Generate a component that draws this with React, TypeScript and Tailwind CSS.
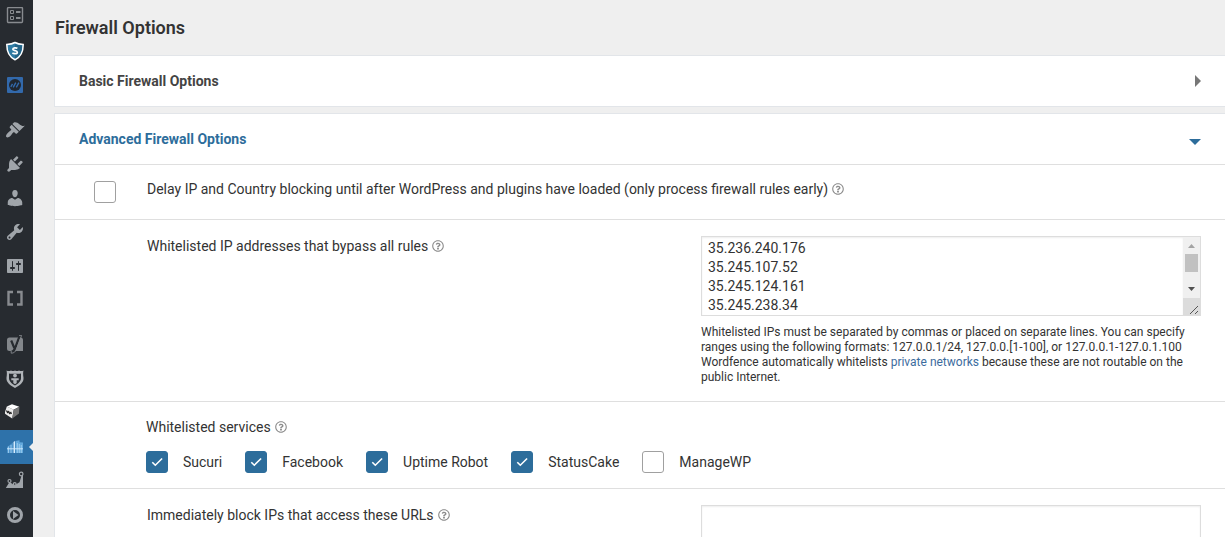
import { useState } from "react";
import type { ReactNode } from "react";
import { FaRegQuestionCircle } from "react-icons/fa";
import clsx from "clsx";

interface MenuItem {
  label: string;
  icon: ReactNode;
  active?: boolean;
  separated?: boolean;
}

const menuItems: MenuItem[] = [
  {
    label: "Forms",
    icon: (
      <g fill="none" stroke="#888b8f">
        <rect x="2.5" y="0.5" width="15" height="15" rx="1" strokeWidth="1.4" />
        <path d="M5.5 3.5h3v3h-3zM5.5 9.5h3v3h-3z" />
        <path d="M11 5h4.5M11 11h4.5" strokeWidth="1.8" />
      </g>
    ),
  },
  {
    label: "Security",
    icon: (
      <>
        <path
          d="M10 1.5C7.5 3 4.5 3.4 1.8 3.5c0 6 1.2 12 8.2 15.2 7-3.200 8.2-9.200 8.2-15.200C15.5 3.4 12.5 3 10 1.500z"
          fill="#2f7ba3"
          stroke="#fff"
          strokeWidth="1.5"
        />
        <path d="M10 3v14.5c5-2.500 7-7 7-13C14.5 4.4 12 4 10 3z" fill="#246487" />
        <path
          d="M12.4 7.4c-1-.8-4.600-1-4.600.9 0 1.800 4.500 1 4.500 2.900 0 2-3.700 1.700-4.900.7"
          fill="none"
          stroke="#fff"
          strokeWidth="1.7"
        />
      </>
    ),
  },
  {
    label: "Managed site",
    icon: (
      <>
        <rect x="2" y="2" width="16" height="16" rx="1" fill="#3269ab" />
        <circle cx="10" cy="10" r="6" fill="#20262e" />
        <path
          d="M5.8 11.8l1.700-3M8.200 12.300l2.600-4.600M11.300 12.300l2.600-4.600"
          stroke="#3269ab"
          strokeWidth="1.4"
        />
      </>
    ),
  },
  {
    label: "Appearance",
    separated: true,
    icon: (
      <path d="M14.48 11.06L7.41 3.99l1.5-1.5c.5-.56 2.3-.47 3.51.32 1.21.8 1.43 1.28 2.91 2.1 1.18.64 2.45 1.26 4.45.85zm-.71.71L6.7 4.7 4.93 6.47c-.39.39-.39 1.02 0 1.41l1.06 1.06c.39.39.39 1.03 0 1.42-.6.6-1.43 1.11-2.21 1.69-.35.26-.7.53-1.01.84C1.43 14.23.4 16.08 1.4 17.07c.99 1 2.84-.03 4.18-1.36.31-.31.58-.66.85-1.02.57-.78 1.08-1.61 1.69-2.21.39-.39 1.02-.39 1.41 0l1.06 1.06c.39.39 1.02.39 1.41 0z" />
    ),
  },
  {
    label: "Plugins",
    icon: (
      <path d="M13.11 4.36L9.87 7.6 8 5.73l3.24-3.24c.35-.34 1.05-.2 1.56.32.52.51.66 1.21.31 1.55zm-8 1.77l.91-1.12 9.01 9.01-1.19.84c-.71.71-2.63 1.16-3.82 1.16H6.14L4.9 17.26c-.59.59-1.54.59-2.12 0-.59-.58-.59-1.53 0-2.12l1.24-1.24v-3.88c0-1.13.4-3.19 1.09-3.89zm7.26 3.97l3.24-3.24c.34-.35 1.04-.21 1.55.31.52.51.66 1.21.31 1.55l-3.24 3.25z" />
    ),
  },
  {
    label: "Users",
    icon: (
      <path d="M10 9.25c-2.27 0-2.73-3.44-2.73-3.44C7 4.02 7.82 2 9.97 2c2.16 0 2.98 2.02 2.71 3.81 0 0-.41 3.44-2.68 3.44zm0 2.57L12.72 10c2.39 0 4.52 2.33 4.52 4.53v2.49s-3.65 1.13-7.24 1.13c-3.65 0-7.24-1.13-7.24-1.13v-2.49c0-2.25 1.94-4.48 4.47-4.48z" />
    ),
  },
  {
    label: "Tools",
    icon: (
      <path d="M16.68 9.77c-1.34 1.34-3.3 1.67-4.95.99l-5.41 6.52c-.99.99-2.59.99-3.58 0s-.99-2.59 0-3.57l6.52-5.42c-.68-1.65-.35-3.61.99-4.95 1.28-1.28 3.12-1.62 4.72-1.06l-2.89 2.89 2.82 2.82 2.86-2.87c.53 1.58.18 3.39-1.08 4.65zM3.81 16.21c.4.39 1.04.39 1.43 0 .4-.4.4-1.04 0-1.43-.39-.4-1.03-.4-1.43 0-.39.39-.39 1.03 0 1.43z" />
    ),
  },
  {
    label: "Settings",
    icon: (
      <path d="M18 16V4c0-.55-.45-1-1-1H3c-.55 0-1 .45-1 1v12c0 .55.45 1 1 1h14c.55 0 1-.45 1-1zM8 11h1c.55 0 1 .45 1 1s-.45 1-1 1H8v1.5c0 .28-.22.5-.5.5s-.5-.22-.5-.5V13H6c-.55 0-1-.45-1-1s.45-1 1-1h1V5.5c0-.28.22-.5.5-.5s.5.22.5.5V11zm5-2h-1c-.55 0-1-.45-1-1s.45-1 1-1h1V5.5c0-.28.22-.5.5-.5s.5.22.5.5V7h1c.55 0 1 .45 1 1s-.45 1-1 1h-1v5.5c0 .28-.22.5-.5.5s-.5-.22-.5-.5V9z" />
    ),
  },
  {
    label: "Shortcodes",
    icon: (
      <path
        d="M8 2H3.5v12.500H8M12 2h4.500v12.500H12"
        fill="none"
        stroke="#888b8f"
        strokeWidth="2.4"
      />
    ),
  },
  {
    label: "SEO",
    separated: true,
    icon: (
      <>
        <path
          d="M4.5 2.500H15.500A2.500 2.500 0 0 1 18 5V16H4.500A2.500 2.500 0 0 1 2 13.500V5a2.500 2.500 0 0 1 2.500-2.500z"
          fill="#83878b"
        />
        <path
          d="M6.200 5.500l3.100 7.500M15 0L10 13.500c-.8 2.200-1.800 3.300-4 3.500"
          fill="none"
          stroke="#272b30"
          strokeWidth="2.2"
        />
        <path
          d="M14 .4h2.600L11.500 14.200c-1 2.600-2.500 4-5.300 4v-2.400"
          fill="none"
          stroke="#83878b"
          strokeWidth="0.9"
        />
      </>
    ),
  },
  {
    label: "Site protection",
    icon: (
      <>
        <path
          d="M1.500 1.500c1.500.8 3 .8 4.500 0 1.300.8 2.700.8 4 0 1.300.8 2.700.8 4 0 1.500.8 3 .8 4.500 0-.6 2-.4 4.500 0 7 .6 5-4 8-8.500 10.500C5.500 16.500.9 13.500 1.500 8.500c.4-2.500.6-5 0-7z"
          fill="#b0b4b8"
        />
        <path
          d="M4 4.500c3 .4 9 .4 12 0v4.500c0 3.300-2.700 5.700-6 7.600C6.700 14.700 4 12.300 4 9z"
          fill="#272b30"
        />
        <circle cx="10" cy="6.600" r="1.900" fill="#b0b4b8" />
        <path
          d="M6.300 9.200h7.400v2h-2v2.800L10 15.200 8.300 14v-2.800h-2z"
          fill="#b0b4b8"
        />
      </>
    ),
  },
  {
    label: "Cache",
    icon: (
      <>
        <path d="M1.800 3.500L7 1.200l7.300 2.600-5.700 3z" fill="#fff" />
        <path d="M1.800 3.500l6.900 3.300L7.200 15.500-.5 10.500z" fill="#ededed" />
        <path d="M8.700 6.800l5.700-3L14 10.500l-6.800 5z" fill="#777" />
        <path
          d="M1.500 7.500l1 2 1.200-1 .8 2 1.300-1 .6 1.600"
          fill="none"
          stroke="#222"
          strokeWidth="1.3"
        />
      </>
    ),
  },
  {
    label: "Wordfence",
    active: true,
    icon: (
      <>
        <path d="M2 10l6-4.500V16H2z" fill="#4c93cb" />
        <path d="M8.500 5l1.500-1v12H8.500z" fill="#d5edff" />
        <path d="M10.500 4l4-.7v2l3.500.2V16h-7.500z" fill="#62a8dc" />
        <path
          d="M3.500 16V9.500M6 16V8M12.300 16V6M14.300 16V7M16.300 16V8"
          stroke="#a8d4f3"
          strokeWidth="0.8"
        />
        <path d="M2 11.800h16" stroke="#d5edff" strokeWidth="0.9" />
      </>
    ),
  },
  {
    label: "Statistics",
    icon: (
      <>
        <path d="M.8 17l3.700-6 5 3.300 5-3 2.500-8.300h1V17z" fill="#a0a5aa" />
        <g fill="#272b30" stroke="#a0a5aa" strokeWidth="1.2">
          <circle cx="4.5" cy="10" r="1.5" />
          <circle cx="9.7" cy="13" r="1.4" />
          <circle cx="16.2" cy="3" r="1.8" />
        </g>
      </>
    ),
  },
  {
    label: "Collapse menu",
    icon: (
      <path
        fillRule="evenodd"
        d="M10 2a8 8 0 1 0 0 16 8 8 0 0 0 0-16zm0 3a5 5 0 1 1 0 10 5 5 0 0 1 0-10zM8 6v8l5.500-4z"
      />
    ),
  },
];

const whitelistedIps = [
  "35.236.240.176",
  "35.245.107.52",
  "35.245.124.161",
  "35.245.238.34",
  "35.245.239.112",
  "35.245.251.20",
].join("\n");

function Sidebar() {
  return (
    <nav className="w-[33px] shrink-0 bg-[#272b30]">
      {menuItems.map((item) => (
        <a
          key={item.label}
          href="#"
          aria-label={item.label}
          className={clsx(
            "relative flex h-[34px] items-center pl-[5px]",
            item.separated && "mt-[11px]",
            item.active && "bg-[#2e72aa]"
          )}
        >
          <svg viewBox="0 0 20 20" className="h-5 w-5 fill-[#a0a5aa]">
            {item.icon}
          </svg>
          {item.active && (
            <svg viewBox="0 0 4 8" className="absolute right-0 h-2 w-1 fill-[#efefef]">
              <path d="M4 0v8L0 4z" />
            </svg>
          )}
        </a>
      ))}
    </nav>
  );
}

function HelpLink() {
  return (
    <a href="#" aria-label="Help" className="ml-1 inline-block text-[#8c8c8c]">
      <FaRegQuestionCircle className="inline h-3 w-3 align-[-1px]" />
    </a>
  );
}

interface CheckboxProps {
  id: string;
  defaultChecked?: boolean;
}

function Checkbox({ id, defaultChecked }: CheckboxProps) {
  return (
    <span className="grid h-[22px] w-[22px] shrink-0">
      <input
        id={id}
        type="checkbox"
        defaultChecked={defaultChecked}
        className="peer col-start-1 row-start-1 appearance-none rounded-[3px] border border-[#a0a0a0] bg-white checked:border-[#2d6d9b] checked:bg-[#2d6d9b]"
      />
      <svg
        viewBox="0 0 22 22"
        className="pointer-events-none invisible col-start-1 row-start-1 fill-none stroke-white peer-checked:visible"
      >
        <path d="M6.3 11.2l3 3 6.800-6.700" strokeWidth="1.6" />
      </svg>
    </span>
  );
}

function Scrollbar() {
  return (
    <div aria-hidden="true" className="flex w-[17px] flex-col bg-[#f0f0f0]">
      <svg viewBox="0 0 17 17" className="h-[17px] fill-[#a3a3a3]">
        <path d="M5 11l3.500-4 3.500 4z" />
      </svg>
      <div className="mx-[2px] h-[18px] bg-[#c1c1c1]" />
      <svg viewBox="0 0 17 17" className="mt-auto h-[17px] fill-[#505050]">
        <path d="M5 6h7l-3.500 4z" />
      </svg>
      <svg viewBox="0 0 17 17" className="h-[17px] bg-[#dcdcdc] stroke-[#555]">
        <path d="M7 16l8-8M12 16l3-3" />
      </svg>
    </div>
  );
}

const services = [
  { name: "Sucuri", enabled: true },
  { name: "Facebook", enabled: true },
  { name: "Uptime Robot", enabled: true },
  { name: "StatusCake", enabled: true },
  { name: "ManageWP", enabled: false },
];

export default function App() {
  const [ips, setIps] = useState(whitelistedIps);
  const [urls, setUrls] = useState("");

  return (
    <div className="flex h-screen overflow-hidden bg-[#efefef] font-['Roboto',sans-serif] text-sm text-[#333]">
      <Sidebar />

      <main className="min-w-0 flex-1 pl-[21px]">
        <h1 className="pt-[14px] pb-[13px] pl-px text-lg font-semibold">Firewall Options</h1>

        <section className="border border-r-0 border-[#e2e5e9] bg-white">
          <button
            type="button"
            aria-expanded="false"
            className="flex h-[50px] w-full items-center justify-between px-6 font-bold text-[#444]"
          >
            Basic Firewall Options
            <svg viewBox="0 0 6 12" className="h-3 w-[6px] fill-[#777]">
              <path d="M0 0l6 6-6 6z" />
            </svg>
          </button>
        </section>

        <section className="mt-[6px] border border-r-0 border-[#e2e5e9] bg-white">
          <button
            type="button"
            aria-expanded="true"
            className="flex h-[50px] w-full items-center justify-between px-6 font-bold text-[#2d6d9b]"
          >
            Advanced Firewall Options
            <svg viewBox="0 0 12 12" className="h-3 w-3 fill-[#2d6d9b]">
              <path d="M0 6h12l-6 6z" />
            </svg>
          </button>

          <div className="flex border-t border-[#dfdfdf] pt-[14px] pb-4 pl-[39px]">
            <div className="w-[53px] pt-[2px]">
              <Checkbox id="delay-blocking" />
            </div>
            <div>
              <label htmlFor="delay-blocking">
                Delay IP and Country blocking until after WordPress and plugins have loaded (only
                process firewall rules early)
              </label>
              <HelpLink />
            </div>
          </div>

          <div className="flex border-t border-[#dfdfdf] pt-4 pr-6 pb-4 pl-[92px]">
            <div className="flex-1">
              <label htmlFor="whitelisted-ips">Whitelisted IP addresses that bypass all rules</label>
              <HelpLink />
            </div>
            <div className="w-[500px]">
              <div className="flex h-20 border border-[#dddddd] bg-white">
                <textarea
                  id="whitelisted-ips"
                  value={ips}
                  onChange={(e) => setIps(e.target.value)}
                  className="flex-1 resize-none overflow-hidden px-[6px] py-[2px] leading-[19px] shadow-[inset_0_1px_2px_rgba(0,0,0,0.07)] outline-none"
                />
                <Scrollbar />
              </div>
              <p className="mt-[9px] text-xs leading-[15px]">
                Whitelisted IPs must be separated by commas or placed on separate lines. You can
                specify ranges using the following formats: 127.0.0.1/24, 127.0.0.[1-100], or
                127.0.0.1-127.0.1.100
                <br />
                Wordfence automatically whitelists{" "}
                <a href="#" className="text-[#3d6c9e]">
                  private networks
                </a>{" "}
                because these are not routable on the public Internet.
              </p>
            </div>
          </div>

          <fieldset className="border-t border-[#dfdfdf] py-[15px] pl-[91px]">
            <div>
              Whitelisted services
              <HelpLink />
            </div>
            <div className="mt-[14px] flex gap-[23px]">
              {services.map((service) => (
                <label key={service.name} className="flex items-center gap-[15px]">
                  <Checkbox id={service.name} defaultChecked={service.enabled} />
                  {service.name}
                </label>
              ))}
            </div>
          </fieldset>

          <div className="flex border-t border-[#dfdfdf] pt-4 pr-6 pb-4 pl-[92px]">
            <div className="flex-1">
              <label htmlFor="blocked-urls">Immediately block IPs that access these URLs</label>
              <HelpLink />
            </div>
            <textarea
              id="blocked-urls"
              value={urls}
              onChange={(e) => setUrls(e.target.value)}
              className="h-20 w-[500px] resize-none border border-[#dddddd] px-[6px] py-[2px] shadow-[inset_0_1px_2px_rgba(0,0,0,0.07)] outline-none"
            />
          </div>
        </section>
      </main>
    </div>
  );
}
